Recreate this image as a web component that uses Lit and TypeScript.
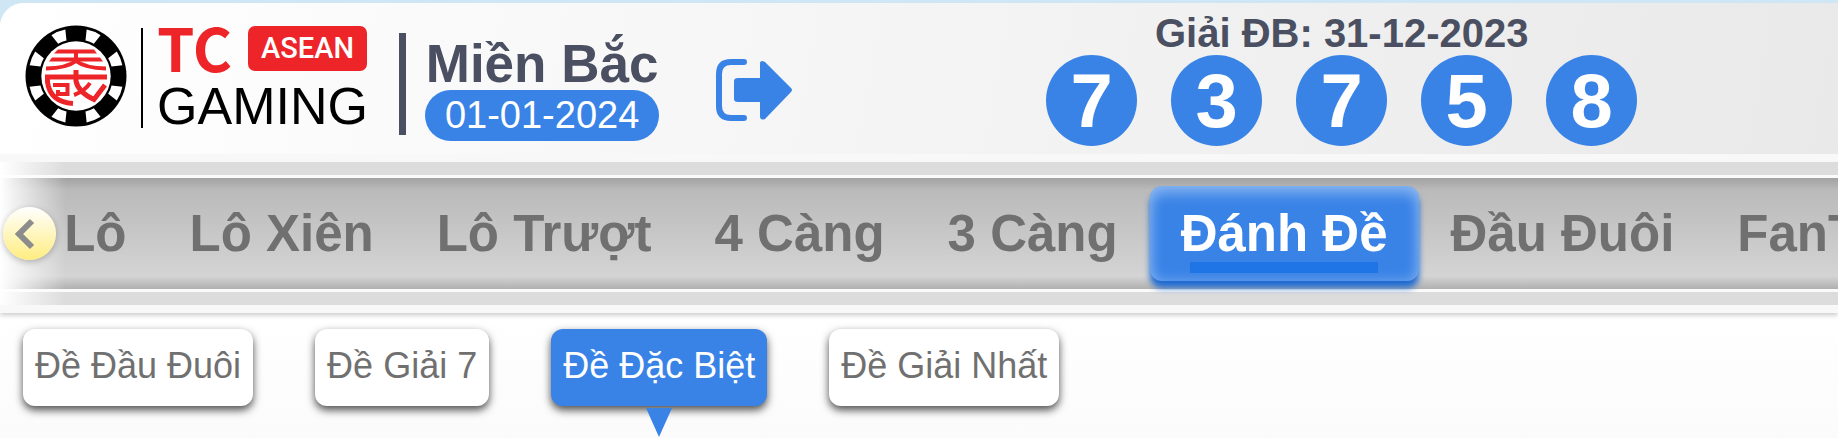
import { LitElement, html, css, svg } from "lit";
import { customElement, state } from "lit/decorators.js";

const TABS = ["Đề", "Lô", "Lô Xiên", "Lô Trượt", "4 Càng", "3 Càng", "Đánh Đề", "Đầu Đuôi", "FanTan"];
const BETS = ["Đề Đầu Đuôi", "Đề Giải 7", "Đề Đặc Biệt", "Đề Giải Nhất"];
const DIGITS = ["7", "3", "7", "5", "8"];

@customElement("brand-logo")
export class BrandLogo extends LitElement {
  static styles = css`
    :host { display: flex; align-items: flex-start; gap: 14px; font-family: "Liberation Sans", Arial, sans-serif; }
    .chip { width: 102px; height: 102px; display: block; }
    .rule { width: 2px; height: 100px; align-self: center; background: #000; }
    .words { display: grid; gap: 10px; padding-top: 1px; }
    .top { display: flex; align-items: flex-start; gap: 16px; }
    .tc { font: 700 60px/40px "Noto Sans CJK SC", sans-serif; color: #ed2529; }
    .asean { font: 500 29px/45px Roboto, sans-serif; color: #fff; background: #ed2529; border-radius: 7px; padding: 0 13px; }
    .gaming { font: 400 52px/50px "Liberation Sans", Arial, sans-serif; color: #000; }
  `;
  render() {
    const slots = [22, 68, 112, 158, 202, 248, 292, 338];
    return html`
      <svg class="chip" viewBox="0 0 102 102" aria-hidden="true">
        <circle cx="51" cy="51" r="50.5" fill="#000" />
        ${slots.map((a) => svg`<path transform="rotate(${a} 51 51)" d="M43.500 4Q51 2.500 58.500 4L55.500 14.500Q51 13.800 46.500 14.500Z" fill="#fff" />`)}
        <circle cx="51" cy="51" r="34.700" fill="#fff" />
        <g fill="none" stroke="#ed2529">
          <path d="M33 24.500H69L72 28.500H29Z" fill="#ed2529" stroke="none" />
          <path d="M27 32.500H75L78 36.500H24Z" fill="#ed2529" stroke="none" />
          <path d="M51 27V36Q42 43 21 43.500M51 36Q60 43 81 43.500" stroke-width="4" />
          <path d="M20 52H82" stroke-width="5" />
          <path d="M22.500 52V57Q25 77 48 78.500" stroke-width="5" />
          <path d="M28 60H42.500V69H33V65" stroke-width="4" />
          <path d="M51 45V56Q53 67 69 74.500L80 60" stroke-width="5" />
          <path d="M65 58Q60 66 49 70" stroke-width="4" />
        </g>
      </svg>
      <span class="rule"></span>
      <div class="words">
        <div class="top"><span class="tc">TC</span><span class="asean">ASEAN</span></div>
        <span class="gaming">GAMING</span>
      </div>
    `;
  }
}

@customElement("app-root")
export class AppRoot extends LitElement {
  @state() private tab = "Đánh Đề";
  @state() private bet = "Đề Đặc Biệt";

  static styles = css`
    :host { display: block; overflow: hidden; padding-top: 3px; background: #cfe7f4; font-family: "Liberation Sans", Arial, sans-serif; }
    * { box-sizing: border-box; }
    button { font: inherit; border: 0; margin: 0; cursor: pointer; }
    .page { background: #fff; border-radius: 24px 0 0 0; overflow: hidden; min-height: calc(100vh - 3px); }
    .header { display: flex; padding: 8px 0; background: linear-gradient(100deg, #fff, #e9e9e9); }
    .left { flex: 0 0 46%; display: flex; align-items: flex-start; padding: 14px 0 0 25px; }
    .bar { width: 7px; height: 102px; background: #4a5062; margin: 8px 19px 0 31px; }
    .region { display: grid; justify-items: center; padding-top: 12px; }
    .name { margin: 0; font-size: 53px; line-height: 53px; font-weight: 700; color: #4a5062; white-space: nowrap; }
    .date { font-size: 38px; line-height: 51px; color: #fff; background: #3983e7; border-radius: 26px; padding: 0 20px; white-space: nowrap; }
    .leave { margin: 34px 0 0 57px; padding: 0; background: none; }
    .leave svg { display: block; width: 76px; height: 62px; }
    .result { flex: 1; display: flex; flex-direction: column; align-items: center; }
    .draw { margin: 0; font-size: 40px; line-height: 44px; font-weight: 700; color: #4a5062; }
    .balls { display: flex; gap: 34px; margin: 0; padding: 0; list-style: none; }
    .ball { width: 91px; height: 91px; border-radius: 50%; background: #3983e7; color: #fff; font-size: 76px; line-height: 91px; font-weight: 700; text-align: center; }
    .nav { position: relative; background: #dcdcdc; border: solid #f8f8f8; border-width: 8px 0; padding: 13px 0; box-shadow: 0 2px 5px rgba(0, 0, 0, 0.22); clip-path: inset(0 0 -12px 0); }
    .tabs { display: flex; height: 117px; padding: 8px 0; border: solid #fafafa; border-width: 3px 0; background: linear-gradient(#a2a2a2, #bababa 12px, #d4d4d4 98px, #b0b0b0); }
    .strip { display: flex; gap: 1px; margin-left: -95px; }
    .tab { position: relative; flex: none; height: 95px; padding: 0 31px; border-radius: 12px; background: none; color: #707070; font-size: 51px; line-height: 94px; font-weight: 700; white-space: nowrap; }
    .tab.on { color: #fff; background: #3983e7; box-shadow: inset 0 0 14px rgba(255, 255, 255, 0.25), inset 0 8px 14px rgba(255, 255, 255, 0.3), 0 7px 6px #1f6bd2; }
    .tab.on::after { content: ""; position: absolute; left: 15%; right: 15%; bottom: 8px; height: 11px; background: #1f75e6; }
    .fade { position: absolute; inset: 0 auto 0 0; width: 66px; background: linear-gradient(90deg, #fff, rgba(255, 255, 255, 0)); }
    .prev { position: absolute; left: 3px; top: 45px; width: 53px; height: 53px; padding: 0; border-radius: 50%; background: linear-gradient(#fff, #ffed80); box-shadow: 0 2px 6px rgba(0, 0, 0, 0.25); }
    .prev svg { display: block; width: 53px; height: 53px; }
    .bets { display: flex; gap: 62px; padding: 16px 23px 32px; background: linear-gradient(#fff, #fbfbfb); }
    .bet { position: relative; height: 77px; padding: 0 12px 3px; border-radius: 12px; background: #fff; color: #707070; font-size: 36px; line-height: 74px; white-space: nowrap; box-shadow: 0 4px 8px rgba(0, 0, 0, 0.7); }
    .bet.on { background: #3983e7; color: #fff; }
    .bet.on::after { content: ""; position: absolute; left: calc(50% - 13px); top: 79px; border: solid transparent; border-width: 29px 13px 0; border-top-color: #3983e7; }
  `;

  render() {
    return html`
      <div class="page">
        <header class="header">
          <div class="left">
            <brand-logo></brand-logo>
            <span class="bar"></span>
            <div class="region">
              <h1 class="name">Miền Bắc</h1>
              <span class="date">01-01-2024</span>
            </div>
            <button class="leave" aria-label="Thoát">
              <svg viewBox="0 0 76 62" aria-hidden="true">
                <path d="M28 3H15Q3 3 3 15V47Q3 59 15 59H28" fill="none" stroke="#3983e7" stroke-width="6" stroke-linecap="round" />
                <path d="M22 19H44V5Q44 0 49 3L75 29Q77 31 75 33L49 60Q44 62 44 57V43H22Q18 43 18 40V22Q18 19 22 19Z" fill="#3983e7" />
              </svg>
            </button>
          </div>
          <section class="result">
            <h2 class="draw">Giải ĐB: 31-12-2023</h2>
            <ul class="balls">${DIGITS.map((d) => html`<li class="ball">${d}</li>`)}</ul>
          </section>
        </header>
        <nav class="nav">
          <div class="tabs"><div class="strip">
            ${TABS.map((t) => html`<button class="tab ${t === this.tab ? "on" : ""}" @click=${() => (this.tab = t)}>${t}</button>`)}
          </div></div>
          <div class="fade"></div>
          <button class="prev" aria-label="Trước">
            <svg viewBox="0 0 53 53" aria-hidden="true"><path d="M29 14L16 27L29 40" fill="none" stroke="#8c8c8c" stroke-width="6" /></svg>
          </button>
        </nav>
        <div class="bets">
          ${BETS.map((b) => html`<button class="bet ${b === this.bet ? "on" : ""}" @click=${() => (this.bet = b)}>${b}</button>`)}
        </div>
      </div>
    `;
  }
}
